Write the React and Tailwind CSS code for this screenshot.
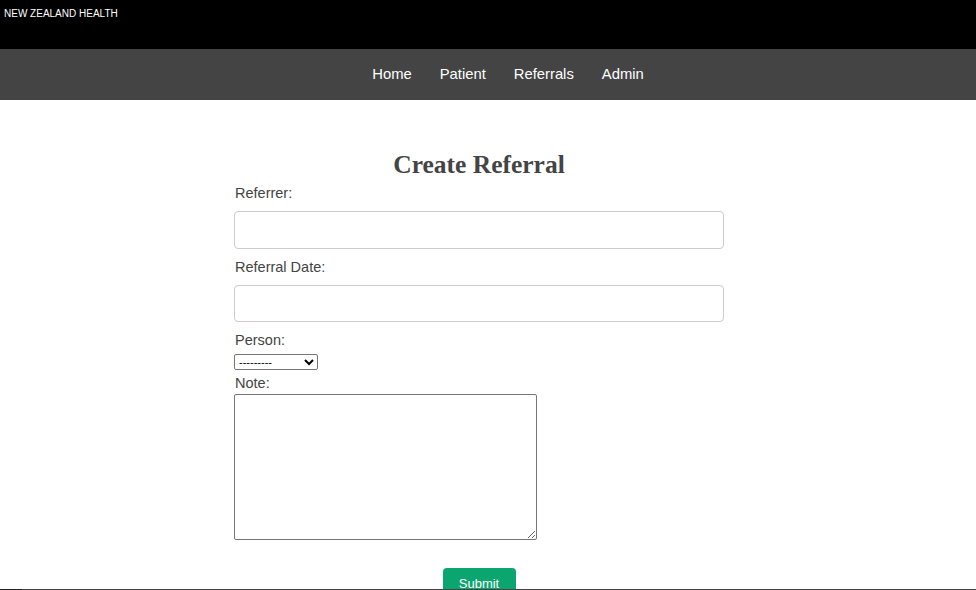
import React from 'react'

const NAV = ['Home', 'Patient', 'Referrals', 'Admin']

export default function App() {
  return (
    <div className="min-h-[590px] bg-white font-['Liberation_Sans',Arial,sans-serif] text-[#444]">
      {/* Top bar */}
      <header className="h-[49px] bg-black text-white">
        <div className="pl-[4px] pt-[7px] text-[10px] leading-[13px]">NEW ZEALAND HEALTH</div>
      </header>

      {/* Nav */}
      <nav className="flex h-[51px] items-center justify-center gap-[28px] bg-[#444] pb-[2px] pl-[40px]">
        {NAV.map((n) => (
          <a key={n} href="#" className="text-[14.8px] leading-[18px] text-white">
            {n}
          </a>
        ))}
      </nav>

      {/* Main */}
      <main className="flex justify-center pt-[51px]">
        <div className="ml-[-18px] w-[490px]">
          <h2 className="text-center font-['Liberation_Serif',Georgia,serif] text-[25.5px] font-bold leading-[28px] text-[#444]">
            Create Referral
          </h2>
          <form className="flex flex-col" onSubmit={(e) => e.preventDefault()}>
            <label className="mt-[5px] block pl-px text-[14.5px] leading-[18px]">Referrer:</label>
            <input type="text" className="mt-[9px] h-[38px] w-full rounded-[4px] border border-[#ccc] px-2 outline-none" />

            <label className="mt-[9px] block pl-px text-[14.5px] leading-[18px]">Referral Date:</label>
            <input type="text" className="mt-[9px] h-[37px] w-full rounded-[4px] border border-[#ccc] px-2 outline-none" />

            <label className="mt-[9px] block pl-px text-[14.5px] leading-[18px]">Person:</label>
            <select className="mt-[5px] h-[16px] w-[84px] rounded-[2px] border border-[#767676] bg-white text-[11px] leading-[14px] text-black">
              <option>---------</option>
            </select>

            <label className="mt-[4px] block pl-px text-[14.5px] leading-[18px]">Note:</label>
            <textarea className="mt-[2px] h-[146px] w-[303px] rounded-[2px] border border-[#767676] outline-none" />

            <div className="mt-[28px] flex justify-center">
              <button type="submit" className="h-[32px] w-[73px] rounded-[4px] bg-[#0ba56f] text-[13px] leading-[16px] text-white">
                Submit
              </button>
            </div>
          </form>
        </div>
      </main>

      {/* Footer edge overlapping the page bottom */}
      <div className="fixed bottom-0 left-0 right-0 flex h-px bg-[#444]">
        <div className="w-[22px] bg-[#222]" />
      </div>
    </div>
  )
}
